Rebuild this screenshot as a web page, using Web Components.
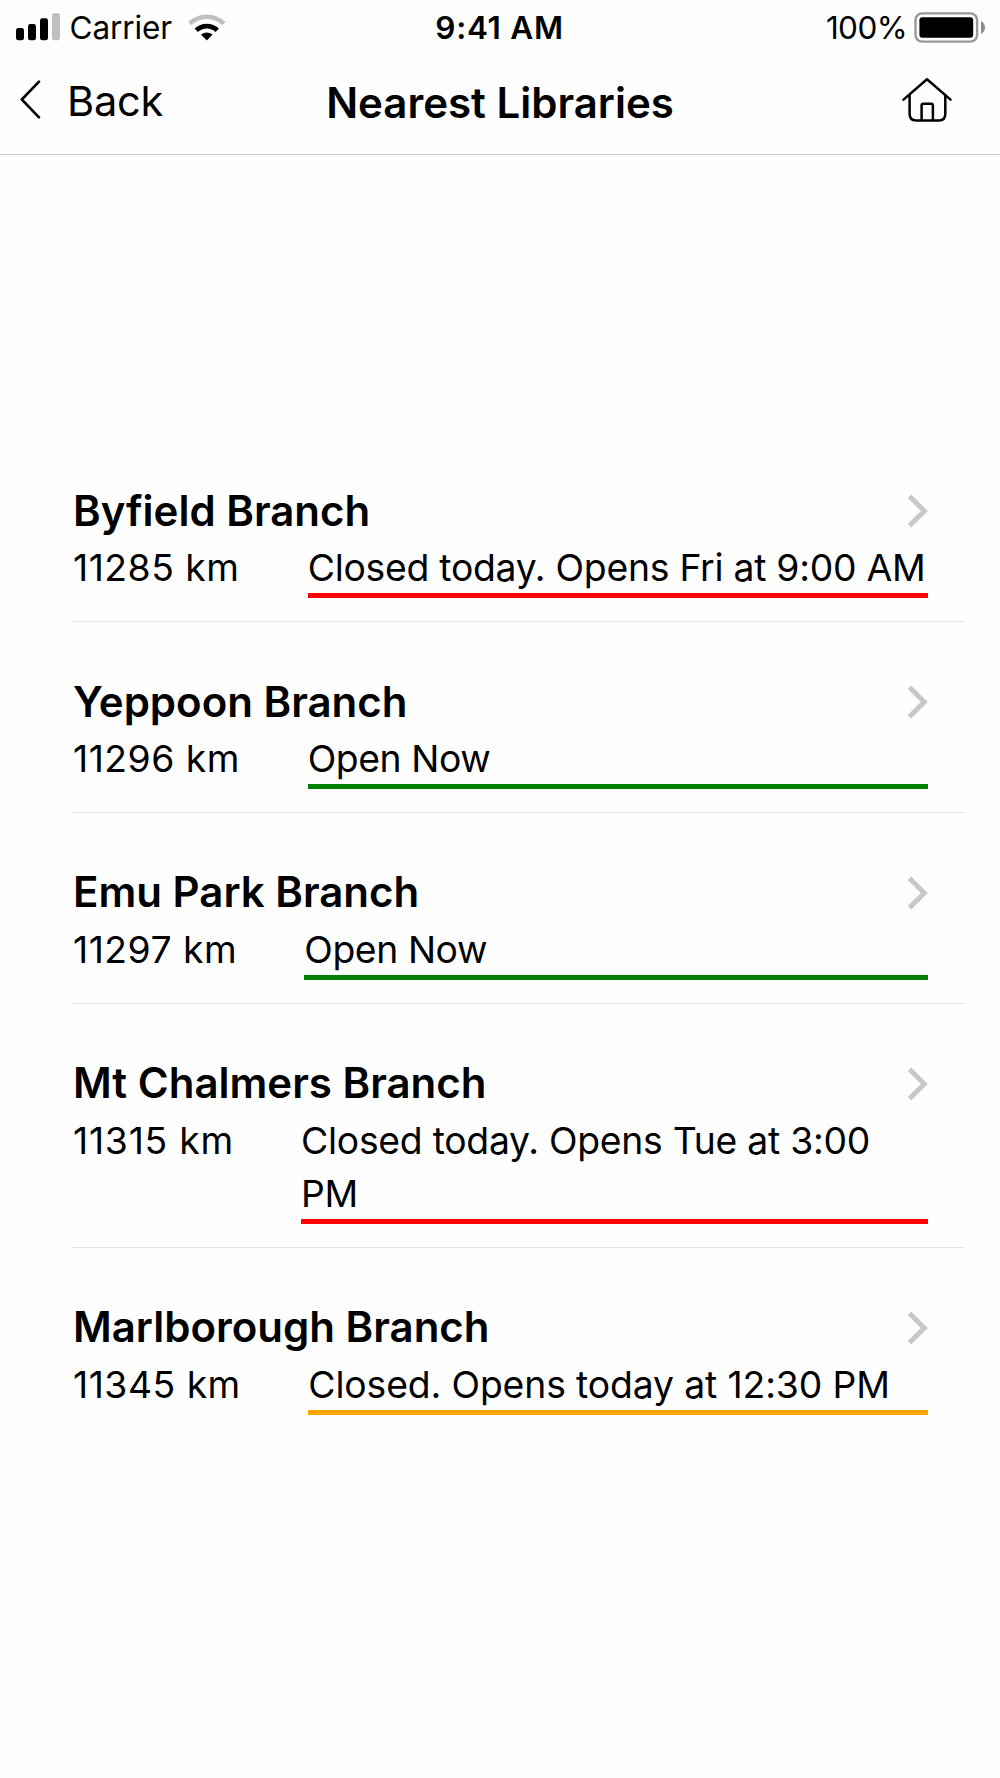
<!DOCTYPE html>
<html lang="en">
<head>
<meta charset="UTF-8">
<title>Nearest Libraries</title>
<style>
  body {
    margin: 0;
    background: #fefefe;
    color: #000;
    font-family: Inter, "Liberation Sans", sans-serif;
  }
</style>
</head>
<body>
<library-app></library-app>
<script>
// Status bar with signal, clock and battery
class StatusBar extends HTMLElement {
  constructor() {
    super();
    this.attachShadow({ mode: 'open' });
  }

  connectedCallback() {
    this.shadowRoot.innerHTML = `
      <style>
        :host {
          display: grid;
          grid-template-columns: minmax(0, 1fr) auto minmax(0, 1fr);
          align-items: center;
          height: 55px;
          padding: 0 15px 0 16px;
          font-size: 31.5px;
          line-height: 55px;
        }
        .left, .right { display: flex; align-items: center; }
        .right { justify-content: flex-end; }
        .carrier {
          margin-right: 14px;
          letter-spacing: -0.1px;
        }
        .time {
          margin-right: 2px;
          font-weight: 600;
          letter-spacing: 0.7px;
        }
        .percent {
          margin-right: 6px;
          letter-spacing: -0.6px;
        }
        svg { display: block; flex: none; }
      </style>
      <div class="left">
        <svg width="53.5" height="55" viewBox="0 0 53.5 55">
          <rect x="0" y="28" width="8" height="12.3" rx="2.4"/>
          <rect x="12" y="24" width="8" height="16.3" rx="2.4"/>
          <rect x="24" y="18.3" width="8" height="22" rx="2.4"/>
          <rect x="36" y="13.3" width="8" height="27" rx="2.4" fill="#bfbfbf"/>
        </svg>
        <span class="carrier">Carrier</span>
        <svg width="40" height="55" viewBox="186 0 40 55" fill="none">
          <path d="M189.8 23.6 A24.5 24.5 0 0 1 223.8 23.6" stroke="#bfbfbf" stroke-width="4.6"/>
          <path d="M196.3 30.3 A15.2 15.2 0 0 1 217.3 30.3" stroke="#000" stroke-width="4.8"/>
          <path d="M201 34.6 Q206.8 30.2 212.6 34.6 L206.8 40.4 Z" fill="#000"/>
        </svg>
      </div>
      <span class="time">9:41 AM</span>
      <div class="right">
        <span class="percent">100%</span>
        <svg width="72" height="55" viewBox="913 0 72 55">
          <rect x="915.5" y="13.4" width="61.6" height="28.2" rx="6.5" fill="none" stroke="#999" stroke-width="2.4"/>
          <rect x="919.4" y="17.3" width="53.8" height="20.4" rx="3"/>
          <path d="M981 21 Q985 23.5 985 27.5 Q985 31.5 981 34 Z" fill="#8c8c8c"/>
        </svg>
      </div>
    `;
  }
}

// Navigation header, the title goes in the slot
class NavHeader extends HTMLElement {
  constructor() {
    super();
    this.attachShadow({ mode: 'open' });
  }

  connectedCallback() {
    this.shadowRoot.innerHTML = `
      <style>
        :host {
          display: grid;
          grid-template-columns: minmax(0, 1fr) auto minmax(0, 1fr);
          height: 99px;
          border-bottom: 1px solid #ccc;
          font-size: 42px;
          line-height: 96px;
        }
        .back {
          display: flex;
          padding-left: 20px;
        }
        .back span {
          font-size: 41.5px;
          line-height: 93px;
          letter-spacing: -0.2px;
        }
        h1 {
          margin: 0;
          font-size: inherit;
          font-weight: 600;
        }
        .home {
          justify-self: end;
          margin-right: 48px;
        }
        svg {
          display: block;
          fill: none;
          stroke: #000;
          stroke-linecap: round;
          stroke-linejoin: round;
        }
      </style>
      <div class="back">
        <svg width="47" height="90" viewBox="20 55 47 90" stroke-width="2.6">
          <path d="M39 81.7 L21.8 99.5 L39 117.3"/>
        </svg>
        <span>Back</span>
      </div>
      <h1><slot></slot></h1>
      <svg class="home" width="50" height="90" viewBox="902 55 50 90" stroke-width="2.5">
        <path d="M903.5 99.6 L927 79.3 L950.5 99.6"/>
        <path d="M909.6 95 V114 Q909.6 120.4 916 120.4 H939 Q945.3 120.4 945.3 114 V95"/>
        <path d="M921.6 120 V105.5 Q921.6 103.8 923.3 103.8 H931.2 Q932.9 103.8 932.9 105.5 V120"/>
      </svg>
    `;
  }
}

// One library in the list
class LibraryRow extends HTMLElement {
  constructor() {
    super();
    this.attachShadow({ mode: 'open' });
  }

  connectedCallback() {
    this.shadowRoot.innerHTML = `
      <style>
        :host {
          display: block;
          padding: 52px 36px 23px 0;
          border-bottom: 1px solid #e4e4e4;
        }
        :host(:last-child) { border-bottom: 0; }
        .top {
          display: flex;
          align-items: center;
          justify-content: space-between;
          height: 57.8px;
        }
        h2 {
          margin: 0 0 3px;
          font-size: 42px;
          font-weight: 600;
          line-height: 50px;
        }
        svg { margin: 0 -0.5px 2px 0; }
        .info {
          display: flex;
          font-size: 37.3px;
          line-height: 53.3px;
        }
        .distance {
          flex: none;
          box-sizing: border-box;
          width: var(--distance-width, 235px);
          letter-spacing: var(--distance-tracking, 0.5px);
          white-space: nowrap;
        }
        .status {
          flex: 1;
          border-bottom: 5px solid var(--status-color, green);
          letter-spacing: var(--status-tracking, -0.25px);
        }
        .status slot {
          display: block;
          margin-bottom: -1.25px;
        }
      </style>
      <div class="top">
        <h2><slot name="name"></slot></h2>
        <svg width="21" height="34" viewBox="0 0 21 34" fill="none" stroke="#c7c7cc" stroke-width="5">
          <path d="M2.5 2.3 L17.3 17 L2.5 31.7"/>
        </svg>
      </div>
      <div class="info">
        <div class="distance"><slot name="distance"></slot></div>
        <div class="status"><slot name="status"></slot></div>
      </div>
    `;
  }
}

class LibraryApp extends HTMLElement {
  constructor() {
    super();
    this.attachShadow({ mode: 'open' });
  }

  connectedCallback() {
    this.shadowRoot.innerHTML = `
      <style>
        :host { display: block; }
        main { padding: 276.4px 36.5px 0 73px; }
        .closed { --status-color: #f00; }
        .open {
          --status-color: #008000;
          --status-tracking: -0.4px;
        }
        .later {
          --status-color: #ffa500;
          --status-tracking: -0.12px;
        }
      </style>
      <status-bar></status-bar>
      <nav-header>Nearest Libraries</nav-header>
      <main>
        <library-row class="closed" style="--distance-width: 234.7px">
          <span slot="name">Byfield Branch</span>
          <span slot="distance">11285 km</span>
          <span slot="status">Closed today. Opens Fri at 9:00 AM</span>
        </library-row>
        <library-row class="open" style="--distance-width: 234.7px">
          <span slot="name">Yeppoon Branch</span>
          <span slot="distance">11296 km</span>
          <span slot="status">Open Now</span>
        </library-row>
        <library-row class="open" style="--distance-width: 231.3px">
          <span slot="name">Emu Park Branch</span>
          <span slot="distance">11297 km</span>
          <span slot="status">Open Now</span>
        </library-row>
        <library-row class="closed" style="--distance-width: 228px; --distance-tracking: 0.75px">
          <span slot="name">Mt Chalmers Branch</span>
          <span slot="distance">11315 km</span>
          <span slot="status">Closed today. Opens Tue at 3:00 PM</span>
        </library-row>
        <library-row class="later" style="--distance-width: 235.3px">
          <span slot="name">Marlborough Branch</span>
          <span slot="distance">11345 km</span>
          <span slot="status">Closed. Opens today at 12:30 PM</span>
        </library-row>
      </main>
    `;
  }
}

customElements.define('status-bar', StatusBar);
customElements.define('nav-header', NavHeader);
customElements.define('library-row', LibraryRow);
customElements.define('library-app', LibraryApp);
</script>
</body>
</html>
